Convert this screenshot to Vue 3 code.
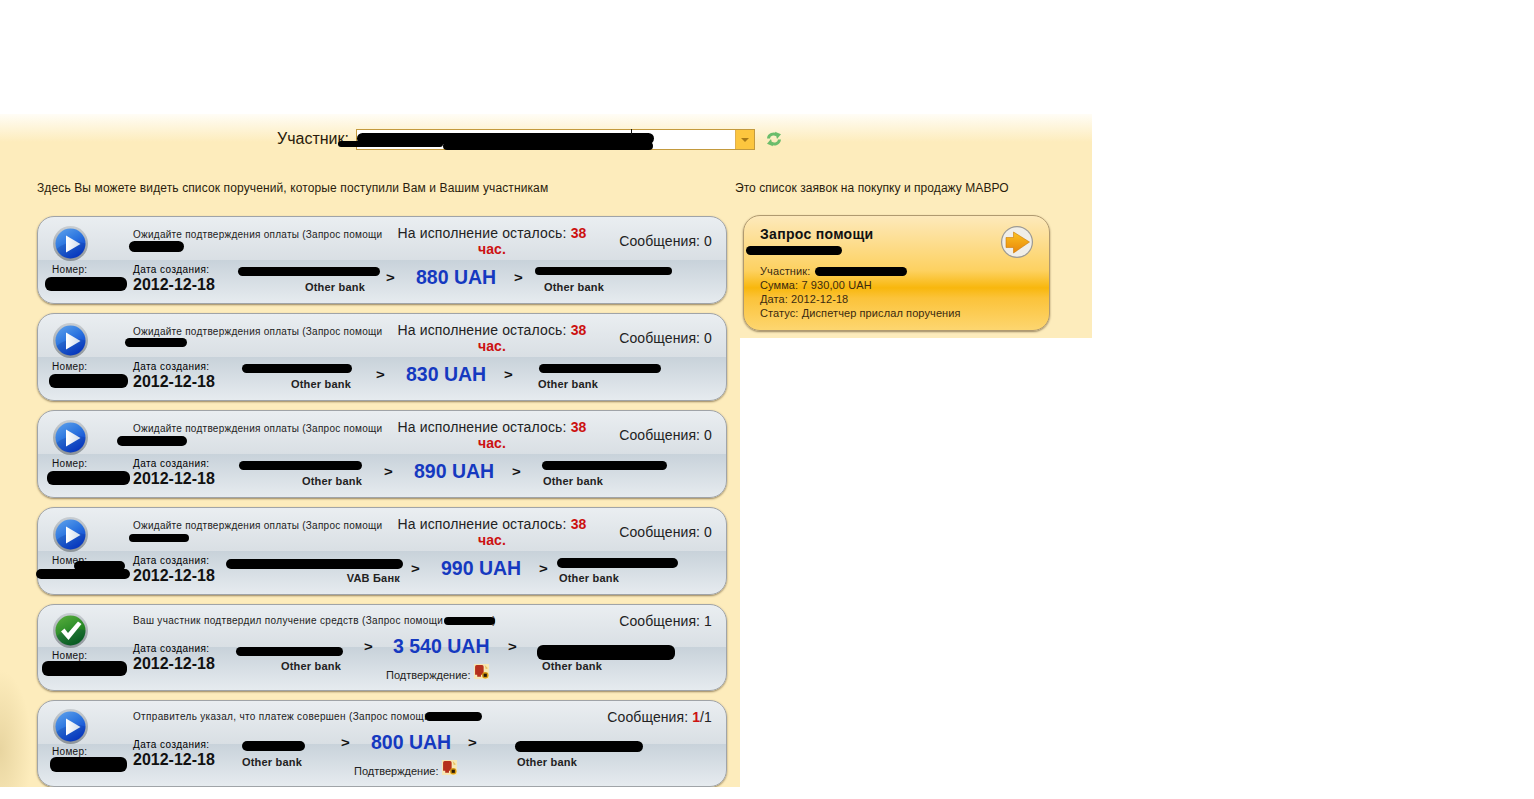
<script setup>
// x values are page coordinates read off the screenshot, turned into column widths below
const orders = [
  {
    top: 216, icon: 'play', status: 'Ожидайте подтверждения оплаты (Запрос помощи', wait: true, msgs: '0',
    bank: 'Other bank', bankEnd: 365, gt1: 386, amountX: 416, gt2: 514, recvX: 544, amount: '880 UAH',
    blobs: [[129, 184, 241, 252], [45, 127, 277, 291], [238, 380, 267, 276], [535, 672, 267, 275]],
  },
  {
    top: 313, icon: 'play', status: 'Ожидайте подтверждения оплаты (Запрос помощи', wait: true, msgs: '0',
    bank: 'Other bank', bankEnd: 351, gt1: 376, amountX: 406, gt2: 504, recvX: 538, amount: '830 UAH',
    blobs: [[125, 187, 338, 347], [49, 128, 374, 388], [242, 352, 364, 373], [539, 661, 364, 373]],
  },
  {
    top: 410, icon: 'play', status: 'Ожидайте подтверждения оплаты (Запрос помощи', wait: true, msgs: '0',
    bank: 'Other bank', bankEnd: 362, gt1: 384, amountX: 414, gt2: 512, recvX: 543, amount: '890 UAH',
    blobs: [[117, 187, 436, 446], [47, 130, 471, 485], [239, 362, 461, 470], [542, 667, 461, 470]],
  },
  {
    top: 507, icon: 'play', status: 'Ожидайте подтверждения оплаты (Запрос помощи', wait: true, msgs: '0',
    bank: 'VAB Банк', bankEnd: 400, gt1: 411, amountX: 441, gt2: 539, recvX: 559, amount: '990 UAH',
    blobs: [[129, 189, 534, 542], [74, 125, 561, 571], [36, 130, 569, 579], [226, 403, 559, 569], [557, 678, 558, 568]],
  },
  {
    top: 604, icon: 'check', status: 'Ваш участник подтвердил получение средств (Запрос помощи', tail: ')', tailGap: 49, msgs: '1', short: true, confirmX: 386,
    bank: 'Other bank', bankEnd: 341, gt1: 364, amountX: 393, gt2: 508, recvX: 542, amount: '3 540 UAH',
    blobs: [[444, 495, 617, 625], [42, 127, 661, 676], [236, 343, 647, 656], [537, 675, 645, 660]],
  },
  {
    top: 700, icon: 'play', status: 'Отправитель указал, что платеж совершен (Запрос помощи', msgs: '/1', unread: '1', short: true, confirmX: 354,
    bank: 'Other bank', bankEnd: 302, gt1: 341, amountX: 371, gt2: 468, recvX: 517, amount: '800 UAH',
    blobs: [[425, 482, 712, 721], [50, 127, 757, 772], [242, 305, 741, 751], [515, 643, 741, 752]],
  },
];

function blobStyle(b, top) {
  return {
    left: b[0] - 38 + 'px',
    width: b[1] - b[0] + 'px',
    top: b[2] - top - 1 + 'px',
    height: b[3] - b[2] + 'px',
  };
}

function cols(o) {
  return {
    sender: { width: o.bankEnd - 215 + 'px' },
    gt1: { width: o.amountX - o.gt1 + 'px', marginLeft: o.gt1 - o.bankEnd + 'px' },
    amount: { width: o.gt2 - o.amountX + 'px' },
    gt2: { width: o.recvX - o.gt2 + 'px' },
    confirm: { marginLeft: o.confirmX - o.amountX + 'px' },
  };
}

const requestLines = ['Сумма: 7 930,00 UAH', 'Дата: 2012-12-18', 'Статус: Диспетчер прислал поручения'];
</script>

<template>
  <svg class="defs" width="0" height="0">
    <defs>
      <linearGradient id="ring" x1="0" y1="0" x2="0" y2="1">
        <stop offset="0" stop-color="#c9ced3" />
        <stop offset="1" stop-color="#8d9499" />
      </linearGradient>
      <linearGradient id="blue" x1="0" y1="0" x2="0.6" y2="1">
        <stop offset="0" stop-color="#62a4ec" />
        <stop offset="0.5" stop-color="#2f78e0" />
        <stop offset="1" stop-color="#0a3fd0" />
      </linearGradient>
      <linearGradient id="green" x1="0" y1="0" x2="0.5" y2="1">
        <stop offset="0" stop-color="#5cb03f" />
        <stop offset="0.55" stop-color="#2f8f2a" />
        <stop offset="1" stop-color="#0d6c14" />
      </linearGradient>
      <linearGradient id="play" x1="0" y1="0" x2="1" y2="0">
        <stop offset="0" stop-color="#ffffff" />
        <stop offset="1" stop-color="#cfdcec" />
      </linearGradient>
      <linearGradient id="arrow" x1="0" y1="0" x2="0" y2="1">
        <stop offset="0" stop-color="#fcc21f" />
        <stop offset="1" stop-color="#e8860a" />
      </linearGradient>
    </defs>
  </svg>

  <div class="page">
    <div class="toolbar">
      <span class="member-label">Участник:</span>
      <div class="combo">
        <div class="combo-value"></div>
        <div class="combo-btn"><i></i></div>
        <div class="blob" style="left: 0; width: 297px; top: 3px; height: 11px"></div>
        <div class="blob" style="left: -19px; width: 105px; top: 11px; height: 6px"></div>
        <div class="blob" style="left: 86px; width: 210px; top: 12px; height: 8px"></div>
        <div class="tick"></div>
      </div>
      <svg class="refresh" width="16" height="16" viewBox="0 0 16 16" fill="none">
        <path d="M2.500 7.500C2.800 3.600 7.400 1.600 11 4" stroke="#6bbd6b" stroke-width="3" />
        <path d="M9 0.800L15 3.200L11 8Z" fill="#6bbd6b" />
        <path d="M13.500 8.500C13.200 12.400 8.600 14.400 5 12" stroke="#6bbd6b" stroke-width="3" />
        <path d="M7 15.200L1 12.800L5 8Z" fill="#6bbd6b" />
      </svg>
    </div>

    <div class="columns">
      <div class="left">
        <p class="hint">Здесь Вы можете видеть список поручений, которые поступили Вам и Вашим участникам</p>

        <div
          v-for="o in orders"
          :key="o.top"
          class="order"
          :class="{ short: o.short }"
        >
          <div class="side">
            <svg class="state" width="35" height="35" viewBox="0 0 35 35">
              <circle cx="17.500" cy="17.500" r="17.500" fill="url(#ring)" />
              <circle cx="17.500" cy="17.500" r="15" :fill="o.icon === 'play' ? 'url(#blue)' : 'url(#green)'" />
              <path d="M3.500 23Q16 13 32.500 17.500A15 15 0 0 1 3.500 23Z" fill="#001a70" opacity="0.18" />
              <path
                v-if="o.icon === 'play'"
                d="M13 9.500L27.500 18L13 26.500Z"
                fill="url(#play)"
              />
              <path
                v-else
                d="M8 18.500L11.500 15.500L15 20L25 8.500L28.500 11L15.500 27Z"
                fill="#fff"
              />
            </svg>
            <div class="number-label">Номер:</div>
          </div>

          <div class="body">
            <div class="head">
              <div class="status">
                {{ o.status }}<span v-if="o.tail" :style="{ marginLeft: o.tailGap + 'px' }">{{ o.tail }}</span>
              </div>
              <div v-if="o.wait" class="remain">
                На исполнение осталось: <b>38</b><br /><b>час.</b>
              </div>
              <div class="msgs">Сообщения: <b v-if="o.unread">{{ o.unread }}</b>{{ o.msgs }}</div>
            </div>

            <div class="details">
              <div class="created">
                <div class="created-label">Дата создания:</div>
                <div class="created-date">2012-12-18</div>
              </div>
              <div class="sender bank" :style="cols(o).sender">{{ o.bank }}</div>
              <div class="gt" :style="cols(o).gt1">&gt;</div>
              <div class="amount-col" :style="cols(o).amount">
                <div class="amount">{{ o.amount }}</div>
                <div v-if="o.short" class="confirm" :style="cols(o).confirm">
                  Подтверждение:
                  <svg width="15" height="15" viewBox="0 0 14 14">
                    <rect width="14" height="14" fill="#f6e7b4" />
                    <path d="M1 2.500Q1 1 2.500 1H7.500Q9 1 9 2.500V10H6.500V12H3V10H1Z" fill="#b5301c" />
                    <circle cx="10.500" cy="10.500" r="3" fill="#d99a12" />
                    <rect x="9" y="9" width="3" height="3" fill="#2a1a08" />
                    <path d="M10 1L13 4L11 5Z" fill="#e8c060" />
                  </svg>
                </div>
              </div>
              <div class="gt" :style="cols(o).gt2">&gt;</div>
              <div class="receiver bank">Other bank</div>
            </div>
          </div>

          <div
            v-for="(b, i) in o.blobs"
            :key="i"
            class="blob"
            :style="blobStyle(b, o.top)"
          ></div>
        </div>
      </div>

      <div class="right">
        <p class="hint">Это список заявок на покупку и продажу МАВРО</p>
        <div class="request">
          <div class="request-title">Запрос помощи</div>
          <svg class="go" width="32" height="32" viewBox="0 0 32 32">
            <circle cx="16" cy="16" r="16" fill="#9c9a94" />
            <circle cx="16" cy="16" r="14.800" fill="#f0eee8" />
            <path d="M5 11.500H12.500V6L28.500 16L12.500 27V21.500H5Z" fill="url(#arrow)" stroke="#c97a08" stroke-width="0.6" />
          </svg>
          <div class="request-lines">
            <div>Участник:</div>
            <div v-for="line in requestLines" :key="line">{{ line }}</div>
          </div>
          <div class="blob" style="left: 2px; width: 96px; top: 30px; height: 9px"></div>
          <div class="blob" style="left: 71px; width: 92px; top: 51px; height: 9px"></div>
        </div>
      </div>
    </div>
  </div>
</template>

<style scoped>
.defs {
  position: absolute;
}
.page {
  padding-top: 114px;
  width: 1092px;
  font-family: "Liberation Sans", Arial, sans-serif;
  color: #1c1208;
}
.toolbar {
  display: flex;
  align-items: flex-start;
  height: 41px;
  padding: 15px 0 0 277px;
  background: linear-gradient(#fffdf6 0, #fdecbc 28px);
}
.member-label {
  font-size: 16px;
  line-height: 19px;
  width: 68px;
  white-space: nowrap;
  color: #2a1c0c;
}
.combo {
  position: relative;
  display: flex;
  width: 399px;
  height: 21px;
  margin-left: 11px;
  border: 1px solid #c39a3e;
  box-sizing: border-box;
  background: #fff;
}
.combo-value {
  flex: 1;
}
.combo-btn {
  display: flex;
  align-items: center;
  justify-content: center;
  width: 18px;
  background: #fcc63f;
  border-left: 1px solid #e0b050;
}
.combo-btn i {
  border: 4px solid transparent;
  border-top-color: #a87a18;
  border-bottom: 0;
}
.tick {
  position: absolute;
  left: 274px;
  top: -1px;
  width: 1px;
  height: 6px;
  background: #111;
}
.refresh {
  margin: 2px 0 0 11px;
}
.columns {
  display: flex;
  align-items: flex-start;
}
.left {
  width: 740px;
  box-sizing: border-box;
  padding: 11px 0 0 37px;
  background:
    radial-gradient(ellipse 32px 80px at 0 580px, #e8d5a0, rgba(232, 213, 160, 0)),
    #fdecbc;
}
.right {
  width: 352px;
  box-sizing: border-box;
  height: 168px;
  padding: 11px 0 0 0;
  background: #fdecbc;
}
.hint {
  margin: 0;
  font-size: 12px;
  line-height: 14px;
  letter-spacing: 0.12px;
  white-space: nowrap;
  color: #2a1c0c;
}
.right .hint {
  margin-left: -5px;
  letter-spacing: 0.06px;
}
.order {
  position: relative;
  display: flex;
  width: 690px;
  height: 88px;
  margin-top: 9px;
  box-sizing: border-box;
  border: 1px solid #a0a4a8;
  border-radius: 17px;
  background: linear-gradient(#eaeef1 0, #d9dfe4 50%, #c8d2da 50%, #e6ebef 100%);
  box-shadow: 0 1px 2px rgba(70, 50, 20, 0.55);
}
.hint + .order {
  margin-top: 21px;
}
.order.short {
  height: 87px;
}
.side {
  width: 95px;
  padding: 9px 0 0 14px;
  box-sizing: border-box;
  flex: none;
}
.short .side {
  padding-top: 8px;
}
.state {
  display: block;
  margin-left: 1px;
}
.number-label {
  margin-top: 3px;
  font-size: 10px;
  line-height: 12px;
  letter-spacing: 0.3px;
  color: #111;
}
.short .number-label {
  margin-top: 2px;
}
.body {
  flex: 1;
  min-width: 0;
}
.head {
  display: flex;
  height: 47px;
  box-sizing: border-box;
  padding-right: 14px;
}
.short .head {
  height: 30px;
  justify-content: space-between;
}
.status {
  width: 264px;
  flex: none;
  padding-top: 12px;
  font-size: 10px;
  line-height: 12px;
  letter-spacing: 0.26px;
  color: #222;
}
.short .status {
  width: auto;
  padding-top: 10px;
  letter-spacing: 0.33px;
  white-space: nowrap;
}
.remain {
  width: 190px;
  flex: none;
  padding-top: 8px;
  font-size: 14px;
  line-height: 16px;
  letter-spacing: 0.15px;
  text-align: center;
  color: #222;
}
.remain b {
  color: #cc1111;
}
.msgs {
  margin-left: auto;
  padding-top: 16px;
  font-size: 14px;
  line-height: 16px;
  letter-spacing: 0.1px;
  white-space: nowrap;
  color: #222;
}
.short .msgs {
  padding-top: 8px;
}
.msgs b {
  color: #cc1111;
}
.details {
  display: flex;
  align-items: flex-start;
}
.created {
  width: 82px;
  flex: none;
}
.created-label {
  font-size: 10px;
  line-height: 12px;
  letter-spacing: 0.42px;
  white-space: nowrap;
  color: #000;
}
.short .created-label {
  margin-top: 8px;
}
.created-date {
  font-size: 16px;
  line-height: 18px;
  font-weight: bold;
  color: #111;
  white-space: nowrap;
}
.bank {
  margin-top: 16px;
  font-size: 11px;
  line-height: 14px;
  font-weight: bold;
  letter-spacing: 0.2px;
  white-space: nowrap;
  color: #222;
}
.short .bank {
  margin-top: 24px;
}
.sender {
  flex: none;
  text-align: right;
}
.gt {
  flex: none;
  margin-top: 2px;
  font-size: 15px;
  font-weight: bold;
  line-height: 24px;
  color: #111;
  transform: scaleY(0.8);
}
.amount-col {
  flex: none;
}
.amount {
  margin-top: 1px;
  font-size: 19.500px;
  line-height: 24px;
  font-weight: bold;
  white-space: nowrap;
  color: #1539c0;
}
.short .gt {
  margin-top: 0;
}
.short .amount {
  margin-top: -1px;
}
.confirm {
  display: flex;
  align-items: flex-start;
  gap: 4px;
  margin-top: 10px;
  font-size: 11px;
  line-height: 14px;
  white-space: nowrap;
  color: #222;
}
.confirm svg {
  margin-top: -4px;
}
.blob {
  position: absolute;
  background: #000;
  border-radius: 6px;
}
.request {
  position: relative;
  width: 307px;
  height: 116px;
  margin: 20px 0 0 3px;
  box-sizing: border-box;
  padding: 9px 16px;
  border: 1px solid #b09a70;
  border-radius: 17px;
  background: linear-gradient(#fde9bb 0, #fdd160 48%, #f8b70d 63%, #fbc33a 72%, #fdd670 100%);
  box-shadow: 0 1px 2px rgba(70, 50, 20, 0.55);
}
.request-title {
  font-size: 14px;
  line-height: 18px;
  font-weight: bold;
  letter-spacing: 0.3px;
  color: #111;
}
.go {
  position: absolute;
  right: 16px;
  top: 10px;
}
.request-lines {
  margin-top: 21px;
  font-size: 11px;
  line-height: 14px;
  letter-spacing: 0.1px;
  white-space: nowrap;
  color: #3a2a10;
}
</style>

<style>
html, body {
  background: #fff;
}
</style>
